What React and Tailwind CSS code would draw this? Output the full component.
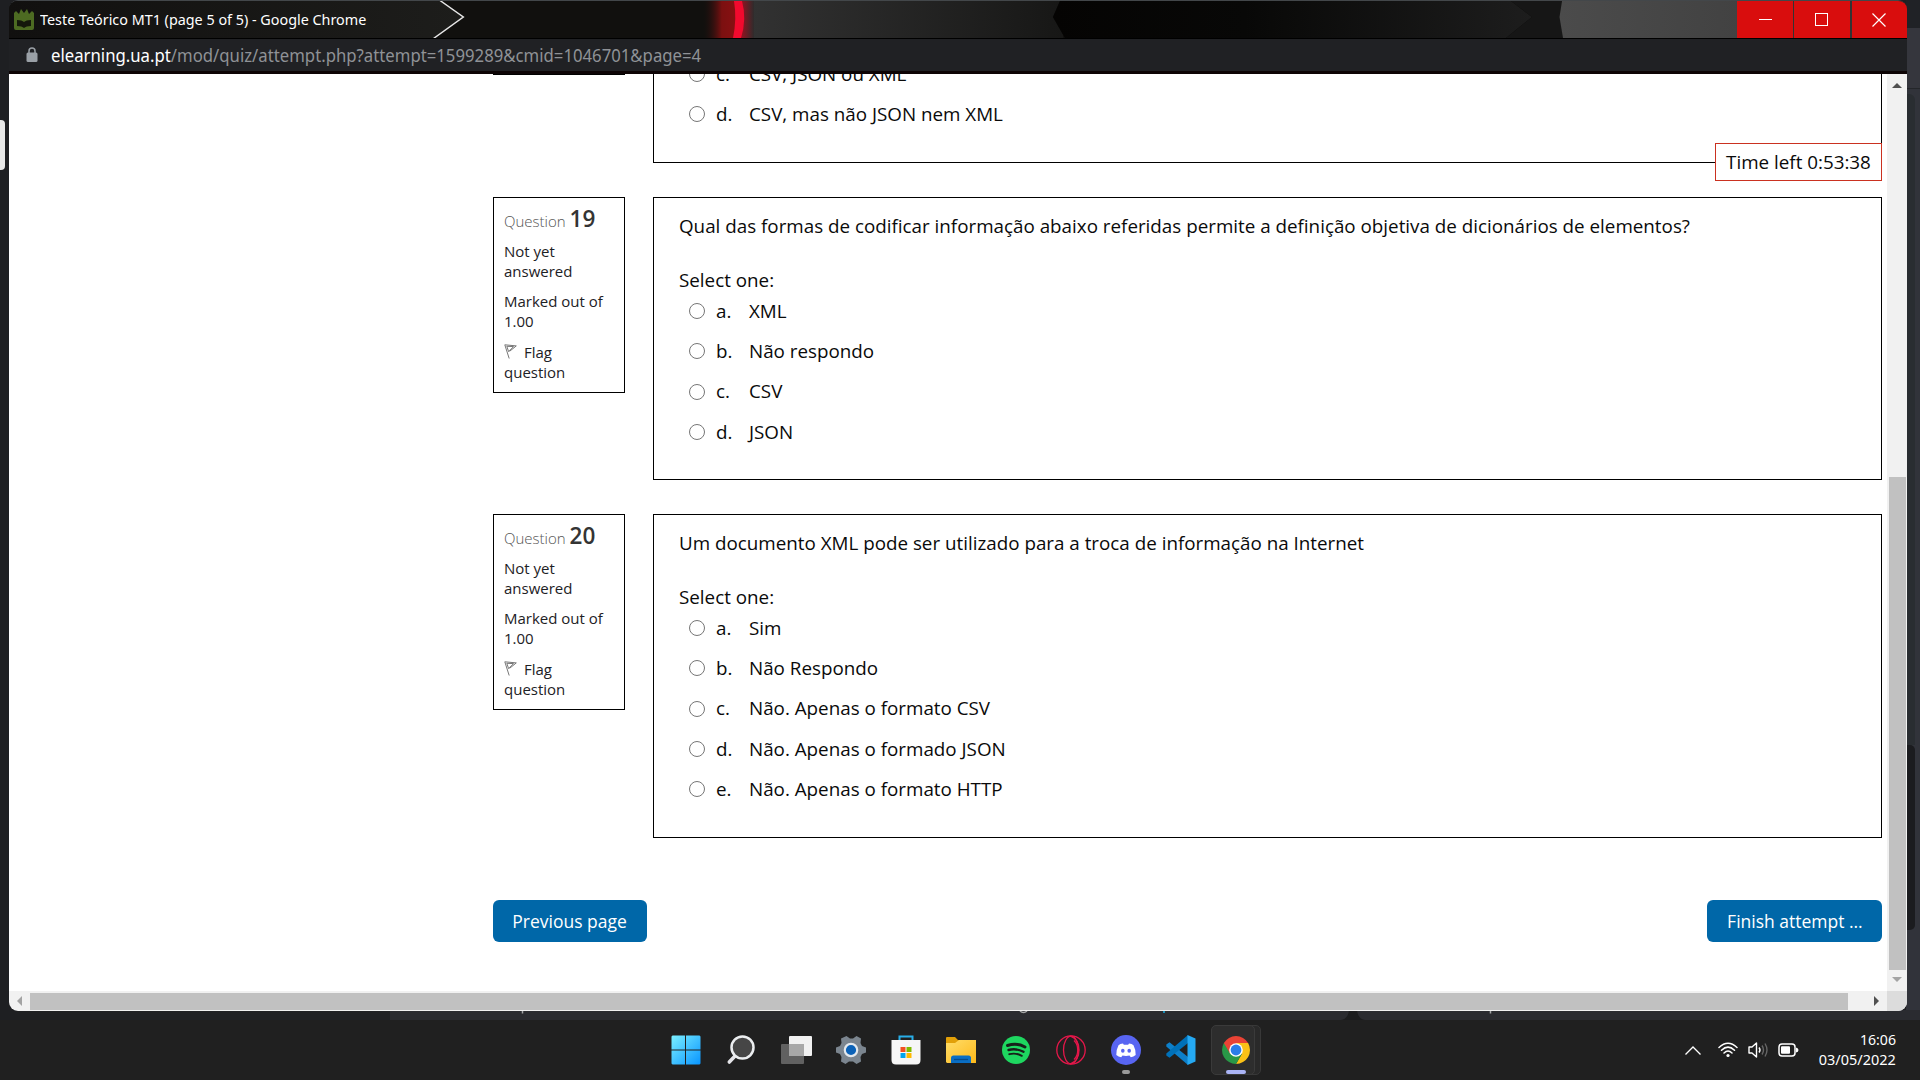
import React from "react";

const win = { fontFamily: '"Open Sans","Noto Sans",sans-serif' };

function Radio() {
  return <span className="mr-[11px] block h-[16px] w-[16px] shrink-0 rounded-full border border-[#767676] bg-white" />;
}

function Option({ letter, text }) {
  return (
    <div className="flex h-[40.3px] items-start">
      <div className="flex h-[28px] items-center pl-[10px]">
        <Radio />
        <span className="w-[33px]">{letter}.</span>
        <span className="whitespace-nowrap">{text}</span>
      </div>
    </div>
  );
}

function FlagIcon() {
  return (
    <svg className="mr-[7px] inline-block translate-y-px align-baseline" width="13" height="15" viewBox="0 0 13 15" fill="none" stroke="#777" strokeWidth="1">
      <path d="M0.8 0.8L5.2 14.5M0.8 0.8L12.3 1.9L5.6 7.3M2.8 2.3L4.6 7.6L9.6 2.6Z" />
    </svg>
  );
}

function Question({ number, text, options, height }) {
  return (
    <div className="flex items-start justify-between">
      <div className="h-[196px] w-[132px] border border-black px-[10px] pt-[7px] text-[15px] leading-[20px] text-[#1d2125]">
        <h3 className="h-[28px] leading-[28px] font-light text-[#555]">
          Question <span className="text-[22.5px] font-semibold text-[#343434]">{number}</span>
        </h3>
        <div className="mt-[8px]">Not yet<br />answered</div>
        <div className="mt-[10px]">Marked out of<br />1.00</div>
        <div className="mt-[11px]"><FlagIcon />Flag<br />question</div>
      </div>
      <div className="w-[1229px] border border-black pt-[14px] pl-[25px]" style={{ height }}>
        <p className="h-[28px] leading-[28px] whitespace-nowrap">{text}</p>
        <p className="mt-[26px] h-[28px] leading-[28px]">Select one:</p>
        <div className="mt-[3px]">
          {options.map((o, i) => <Option key={o} letter={"abcde"[i]} text={o} />)}
        </div>
      </div>
    </div>
  );
}

function TitleBar() {
  return (
    <div className="relative flex h-[37px] shrink-0 items-center bg-[#11100e]">
      <svg className="absolute inset-0" width="1898" height="37" viewBox="9 1 1898 37">
        <defs>
          <linearGradient id="g1"><stop offset="0" stopColor="#11100f" /><stop offset="1" stopColor="#1d1d1b" /></linearGradient>
          <linearGradient id="g2"><stop offset="0" stopColor="#333" /><stop offset="1" stopColor="#171716" /></linearGradient>
          <linearGradient id="g3"><stop offset="0" stopColor="#050403" /><stop offset="0.4" stopColor="#080807" /><stop offset="1" stopColor="#1d1d1d" /></linearGradient>
          <linearGradient id="g4"><stop offset="0" stopColor="#11100e" stopOpacity="0" /><stop offset="0.55" stopColor="#7c1010" /><stop offset="1" stopColor="#8a1012" /></linearGradient>
          <linearGradient id="g5"><stop offset="0" stopColor="#a00f1e" /><stop offset="1" stopColor="#2e2c2c" /></linearGradient>
          <linearGradient id="g6"><stop offset="0" stopColor="#4b4b4b" /><stop offset="1" stopColor="#424242" /></linearGradient>
        </defs>
        <path d="M9 1H441L463.500 17L434.500 38H9Z" fill="url(#g1)" />
        <path d="M440 0.500L463.300 17L433.500 38.500" fill="none" stroke="#e6e6e6" strokeWidth="1.500" />
        <rect x="738" y="1" width="325" height="37" fill="url(#g2)" />
        <rect x="702" y="1" width="36" height="37" fill="url(#g4)" />
        <rect x="740" y="1" width="14" height="37" fill="url(#g5)" />
        <path d="M734 1H742Q747 19 741 38H733Q737 19 734 1Z" fill="#f20a2e" />
        <path d="M1060 1L1053 17L1065 38H1560V1Z" fill="#0a0a09" />
        <path d="M1060 1L1053 17L1065 38H1506L1532 17L1511 1Z" fill="url(#g3)" />
        <path d="M1511 1L1532 17L1506 38H1563L1560 17L1562 1Z" fill="#161616" />
        <path d="M1562 1L1559.500 17L1563 38H1740V1Z" fill="url(#g6)" />
      </svg>
      <svg className="relative ml-[5px]" width="20" height="21" viewBox="0 0 20 21">
        <path d="M0 4L2 2L5 5L7 0L10 4L13 0L15 5L18 2L20 4V19Q20 21 18 21H2Q0 21 0 19Z" fill="#4d6b22" />
        <path d="M3 11Q8 11 10 13Q12 11 17 11V17Q12 17 10 19Q8 17 3 17Z" fill="#14180b" />
      </svg>
      <span className="relative ml-[6px] text-[15px] whitespace-nowrap text-white" style={{ fontFamily: '"Noto Sans",sans-serif' }}>
        <span className="inline-block origin-left scale-x-[0.957]">Teste Teórico MT1 (page 5 of 5) - Google Chrome</span>
      </span>
      <div className="absolute top-0 right-0 flex h-full bg-[#333]">
        <div className="mr-px flex w-[56px] items-center justify-center bg-[#d90d0d]"><span className="h-px w-[13px] bg-white" /></div>
        <div className="mr-[2px] flex w-[56px] items-center justify-center bg-[#d90d0d]"><span className="mr-px h-[13px] w-[13px] border border-white" /></div>
        <div className="flex w-[55px] items-center justify-center bg-[#d90d0d]">
          <svg className="mr-[2px]" width="14" height="14" viewBox="0 0 14 14" stroke="#fff" strokeWidth="1.2"><path d="M.5.5L13.500 13.500M13.500.5L.5 13.500" /></svg>
        </div>
      </div>
    </div>
  );
}

function AddressBar() {
  return (
    <div className="flex h-[36px] shrink-0 items-center border-t border-b-[3px] border-t-black border-b-[#0d0405] bg-[#202124]">
      <svg className="ml-[17px]" width="12" height="16" viewBox="0 0 12 16">
        <rect x="0.500" y="5.500" width="11" height="9.500" rx="1.500" fill="#9aa0a6" />
        <path d="M3 6V4a3 3 0 0 1 6 0v2" fill="none" stroke="#9aa0a6" strokeWidth="1.500" />
      </svg>
      <span className="ml-[13px] text-[17.500px] whitespace-nowrap text-[#8f9296]" style={{ fontFamily: '"Noto Sans",sans-serif' }}>
        <span className="inline-block origin-left scale-x-[0.956]"><span className="text-white">elearning.ua.pt</span>/mod/quiz/attempt.php?attempt=1599289&amp;cmid=1046701&amp;page=4</span>
      </span>
    </div>
  );
}

function TaskIcon({ children, className = "" }) {
  return <div className={"relative flex h-[50px] w-[48px] items-center justify-center " + className}>{children}</div>;
}

function Taskbar() {
  return (
    <div className="relative flex h-[60px] w-full shrink-0 items-center bg-[#202020]">
      <div className="ml-[662px] flex gap-[7px]">
        <TaskIcon>
          <svg width="30" height="30" viewBox="0 0 30 30">
            <defs><linearGradient id="w" x1="0" y1="0" x2="30" y2="30" gradientUnits="userSpaceOnUse"><stop offset="0" stopColor="#7df1ff" /><stop offset="1" stopColor="#0693ff" /></linearGradient></defs>
            <path d="M1.500.5H14V14.500H.5V1.500ZM15 .5H28.500L29.500 1.500V14.500H15ZM.5 15.500H14V29.500H1.500L.5 28.500ZM15 15.500H29.500V28.500L28.500 29.500H15Z" fill="url(#w)" />
          </svg>
        </TaskIcon>
        <TaskIcon>
          <svg width="30" height="30" viewBox="0 0 30 30">
            <path d="M10 20L3.300 27" stroke="#e4e4e8" strokeWidth="3.600" strokeLinecap="round" />
            <circle cx="16.500" cy="12.500" r="11" fill="#464646" stroke="#eceef0" strokeWidth="2.500" />
          </svg>
        </TaskIcon>
        <TaskIcon>
          <svg width="32" height="30" viewBox="0 0 32 30">
            <rect x="9" y="1" width="23" height="20" rx="1" fill="#f1f1f1" />
            <rect x="1" y="9" width="23" height="20" rx="1" fill="#616161" />
            <path d="M9 9H24V21H9Z" fill="#a8a8a8" />
          </svg>
        </TaskIcon>
        <TaskIcon>
          <svg width="30" height="30" viewBox="0 0 30 30">
            <path d="M10.500 1L14 3.500H17L20.500 1L25 3.500L24.500 8L26 11L30 12.500V17.500L26 19L24.500 22L25 26.500L20.500 29L17 26.500H13L9.500 29L5 26.500L5.500 22L4 19L0 17.500V12.500L4 11L5.500 8L5 3.500Z" fill="#7b858f" />
            <circle cx="15" cy="15" r="6.200" fill="#0b62b8" stroke="#e3e8ed" strokeWidth="2.200" />
          </svg>
        </TaskIcon>
        <TaskIcon>
          <svg width="30" height="30" viewBox="0 0 30 30">
            <path d="M8.500 7V1.500H21.500V7" fill="none" stroke="#28aee8" strokeWidth="2" />
            <path d="M.5 5H29.500V25Q29.500 29.500 25 29.500H5Q.5 29.500 .5 25Z" fill="#f6f6f6" />
            <path d="M9.500 12h5v5h-5z" fill="#f25022" /><path d="M15.500 12h5v5h-5z" fill="#7fba00" />
            <path d="M9.500 18h5v5h-5z" fill="#00a4ef" /><path d="M15.500 18h5v5h-5z" fill="#ffb900" />
          </svg>
        </TaskIcon>
        <TaskIcon>
          <svg width="32" height="30" viewBox="0 0 32 30">
            <defs><linearGradient id="f" x2="1" y2="1"><stop stopColor="#ffdd69" /><stop offset="1" stopColor="#fdb91a" /></linearGradient></defs>
            <path d="M1 3Q1 2 2 2H10L13 5H31V12H1Z" fill="#e2a008" />
            <path d="M1 8H10L14 5H31V28H2L1 27Z" fill="url(#f)" />
            <path d="M6 28V23Q6 20.500 8.500 20.500H23.500Q26 20.500 26 23V28Z" fill="#0a6ec4" />
            <path d="M9 24.500H23" stroke="#064b8c" strokeWidth="1.300" />
          </svg>
        </TaskIcon>
        <TaskIcon>
          <svg width="28" height="28" viewBox="0 0 28 28" fill="none" stroke="#17211a" strokeLinecap="round">
            <circle cx="14" cy="14" r="14" fill="#1ed760" stroke="none" />
            <path d="M5.500 9.500Q15 6.500 23 11" strokeWidth="2.900" /><path d="M6.500 14Q14 11.800 21.500 15.800" strokeWidth="2.400" /><path d="M7.300 18.200Q14 16.500 19.800 19.800" strokeWidth="1.900" />
          </svg>
        </TaskIcon>
        <TaskIcon>
          <svg width="30" height="30" viewBox="0 0 30 30" fill="none" stroke="#e5174a" strokeWidth="1.300">
            <circle cx="15" cy="15" r="14.200" /><ellipse cx="15" cy="15" rx="7.500" ry="13.800" /><path d="M18 5.500C23 10 23 20 18 24.500" /><path d="M14 1Q23 4 23 15Q23 26 14 29" />
          </svg>
        </TaskIcon>
        <TaskIcon>
          <svg width="30" height="30" viewBox="0 0 30 30">
            <circle cx="15" cy="15" r="15" fill="#5865f2" />
            <path d="M12 8.500Q9 8.800 7.500 10.200Q5 15 5.300 20Q7.500 22 10.200 22.300L11.500 20.500Q15 21.400 18.500 20.500L19.800 22.300Q22.500 22 24.700 20Q25 15 22.500 10.200Q21 8.800 18 8.500L17.200 9.800H12.800Z" fill="#fff" />
            <ellipse cx="11.800" cy="15.700" rx="1.800" ry="2" fill="#5865f2" /><ellipse cx="18.200" cy="15.700" rx="1.800" ry="2" fill="#5865f2" />
          </svg>
          <span className="absolute bottom-[1px] h-[4px] w-[8px] rounded-full bg-[#9a9a9a]" />
        </TaskIcon>
        <TaskIcon>
          <svg width="30" height="30" viewBox="0 0 30 30">
            <path d="M3.500 7.300L22 22V30L.3 11.500V9.500Z" fill="#0d7fc9" />
            <path d="M22 0V8L3.500 22.700L.3 20.500V18.500Z" fill="#0071b9" />
            <path d="M21.500 0L29.500 3.500V26.500L21.500 30Z" fill="#25a9f2" />
          </svg>
        </TaskIcon>
        <div className="relative -ml-[1px]">
          <div className="absolute top-0 left-[2px] h-[50px] w-[48px] rounded-[5px] border border-[#383838] bg-[#292929]" />
          <TaskIcon className="!w-[44px] rounded-[5px] border border-[#3a3a3a] bg-[#2d2d2d]">
            <svg className="relative left-[3px] shrink-0" width="28" height="28" viewBox="0 0 28 28">
              <path d="M14 14L1.880 7A14 14 0 0 1 26.120 7Z" fill="#ea4335" /><path d="M14 7H26.120A14 14 0 0 1 14 28L20.060 17.500Z" fill="#fbc116" /><path d="M1.880 7A14 14 0 0 0 14 28L20.060 17.500L14 14Z" fill="#299847" />
              <path d="M1.880 7L8 17.500L14 7Z" fill="#ea4335" /><circle cx="14" cy="14" r="6.800" fill="#fff" /><circle cx="14" cy="14" r="5.400" fill="#2a7de9" />
            </svg>
            <span className="absolute bottom-0 left-[14px] h-[4px] w-[20px] rounded-full bg-[#aab4f5]" />
          </TaskIcon>
        </div>
      </div>
      <div className="mr-[24px] ml-auto flex items-center text-white">
        <svg width="16" height="9" viewBox="0 0 16 9" fill="none" stroke="#fff" strokeWidth="1.300"><path d="M.5 8.500L8 1L15.500 8.500" /></svg>
        <svg className="ml-[17px]" width="20" height="16" viewBox="0 0 20 16" fill="none" stroke="#fff" strokeWidth="1.500" strokeLinecap="round">
          <path d="M1 5.500Q10-3 19 5.500M3.500 8.300Q10 2 16.500 8.300M6 11Q10 7 14 11" /><circle cx="10" cy="13.500" r="1.600" fill="#fff" stroke="none" />
        </svg>
        <svg className="ml-[10px]" width="21" height="18" viewBox="0 0 21 18" fill="none" stroke="#fff" strokeWidth="1.400">
          <path d="M1 6H4L8.500 2V16L4 12H1Z" strokeLinejoin="round" /><path d="M11 6.500Q13 9 11 11.500" /><path d="M14 4.500Q17 9 14 13.500M17 2.500Q21 9 17 15.500" stroke="#666" />
        </svg>
        <svg className="ml-[9px]" width="21" height="14" viewBox="0 0 21 14">
          <rect x="1" y="1" width="16" height="12" rx="3" fill="none" stroke="#fff" strokeWidth="1.500" /><rect x="3" y="3.300" width="9" height="7.500" rx="1" fill="#fff" /><path d="M18 4.500Q20.500 5 20.500 7Q20.500 9 18 9.500Z" fill="#fff" />
        </svg>
        <div className="-mt-[2px] ml-[20px] w-[77px] text-right text-[15px] leading-[20px]" style={{ fontFamily: '"Noto Sans",sans-serif' }}>
          <div className="origin-right scale-x-[0.94]">16:06</div>
          <div className="flex justify-end"><span className="origin-right scale-x-[0.965] whitespace-nowrap">03/05/2022</span></div>
        </div>
      </div>
    </div>
  );
}

export default function App() {
  return (
    <div className="relative flex h-[1080px] w-[1920px] flex-col overflow-hidden bg-[#1e1f22]" style={win}>
      <div className="absolute top-0 right-0 h-[1020px] w-[14px] bg-[#31333a]">
        <div className="h-[28px] bg-[#202226]" /><div className="h-[60px] bg-[#35363d]" /><div className="h-px bg-[#24262a]" />
        <div className="mt-[5px] h-[651px] w-[9px] rounded-tr-[6px] bg-[#292d31]" />
        <div className="h-[185px] w-[9px] rounded-r-[5px] bg-[#1b1c1f]" />
      </div>
      <div className="absolute top-[1010px] left-[90px] h-[10px] w-[300px] bg-[#202124]" />
      <div className="absolute top-[1010px] left-[390px] h-[10px] w-[1530px] bg-[#2a2b30]" />
      <svg className="absolute top-[1010px] left-[520px]" width="980" height="10" viewBox="520 1010 980 10">
        <path d="M1341 1020Q1348 1019 1349 1010H1357Q1358 1019 1365 1020Z" fill="#1b1c1e" />
        <path d="M1020 1011Q1023.500 1014 1027 1011" fill="none" stroke="#a5a6a8" strokeWidth="1.500" />
        <path d="M522.500 1011V1013.500M1490.500 1011V1013.500" stroke="#a5a6a8" strokeWidth="1.500" />
        <path d="M1164 1011V1013" stroke="#1a8bb5" strokeWidth="2" />
      </svg>
      <div className="absolute top-[120px] left-0 h-[50px] w-[5px] rounded-r-[4px] bg-[#e8e8e8]" />
      <div className="relative mr-[13px] ml-[9px] flex h-[1011px] shrink-0 flex-col overflow-hidden rounded-[9px] border-t border-[#43474a]">
        <TitleBar />
        <AddressBar />
        <div className="relative flex h-[917px] shrink-0 bg-white text-[18.810px] text-[#0a0a0a]">
          <div className="relative flex-1 overflow-hidden pl-[484px]">
            <div className="flex h-[89px] w-[1389px] justify-between">
              <div className="h-px w-[132px] bg-black" />
              <div className="w-[1229px] overflow-hidden border-x border-b border-black pl-[25px]">
                <div className="-mt-[14px]"><Option letter="c" text="CSV, JSON ou XML" /><Option letter="d" text="CSV, mas não JSON nem XML" /></div>
              </div>
            </div>
            <div className="mt-[34px] w-[1389px]">
              <Question number="19" height={283} text="Qual das formas de codificar informação abaixo referidas permite a definição objetiva de dicionários de elementos?" options={["XML", "Não respondo", "CSV", "JSON"]} />
            </div>
            <div className="mt-[34px] w-[1389px]">
              <Question number="20" height={324} text="Um documento XML pode ser utilizado para a troca de informação na Internet" options={["Sim", "Não Respondo", "Não. Apenas o formato CSV", "Não. Apenas o formado JSON", "Não. Apenas o formato HTTP"]} />
            </div>
            <div className="mt-[62px] flex w-[1389px] justify-between text-white">
              <button className="flex h-[42px] w-[154px] items-center justify-center rounded-[6px] bg-[#0067a8] whitespace-nowrap"><span className="scale-x-[0.93]">Previous page</span></button>
              <button className="flex h-[42px] w-[175px] items-center justify-center rounded-[6px] bg-[#0067a8] whitespace-nowrap"><span className="scale-x-[0.93]">Finish attempt ...</span></button>
            </div>
            <div className="absolute top-[69px] left-[1706px] flex h-[38px] w-[167px] items-center justify-center border border-[#ca3120] bg-white whitespace-nowrap">Time left 0:53:38</div>
          </div>
          <div className="flex w-[20px] flex-col items-center bg-[#f1f1f1]">
            <svg className="mt-[9px]" width="10" height="5" viewBox="0 0 10 5"><path d="M0 5L5 0L10 5Z" fill="#505050" /></svg>
            <div className="mt-[389px] h-[493px] w-[17px] bg-[#c1c1c1]" />
            <svg className="mt-[7px]" width="10" height="5" viewBox="0 0 10 5"><path d="M0 0H10L5 5Z" fill="#a3a3a3" /></svg>
          </div>
        </div>
        <div className="flex h-[20px] items-center bg-[#f1f1f1]">
          <svg className="ml-[8px]" width="5" height="10" viewBox="0 0 5 10"><path d="M5 0V10L0 5Z" fill="#a3a3a3" /></svg>
          <div className="ml-[8px] h-[17px] w-[1818px] bg-[#c1c1c1]" />
          <svg className="ml-[26px]" width="5" height="10" viewBox="0 0 5 10"><path d="M0 0V10L5 5Z" fill="#505050" /></svg>
          <div className="ml-auto h-full w-[20px] bg-[#dcdcdc]" />
        </div>
      </div>
      <div className="mt-auto"><Taskbar /></div>
    </div>
  );
}
